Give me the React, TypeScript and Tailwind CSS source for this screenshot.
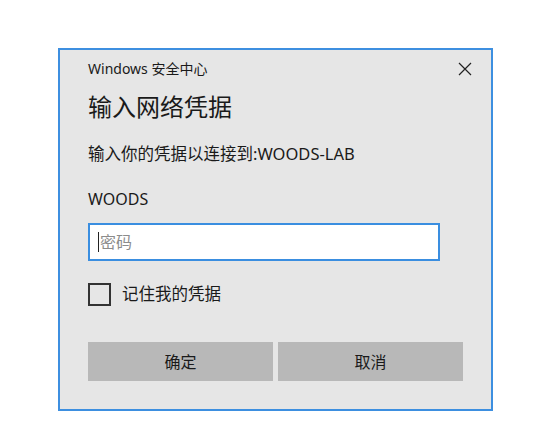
import React from "react";

const font = { fontFamily: '"Noto Sans", "Noto Sans CJK SC", sans-serif' };

const App: React.FC = () => {
  return (
    <div className="w-[554px] h-[439px] bg-white pt-[48px] pl-[58px]" style={font}>
      <div className="w-[435px] h-[363px] bg-[#3d8fe0] p-[2px]">
        <div className="w-full h-full bg-[#e6e6e6] flex flex-col px-[28px]">
          <div className="flex items-center justify-between mt-[9px] h-[20px] -mr-[9px]">
            <span className="text-[14px] leading-[20px] text-[#1a1a1a]">Windows 安全中心</span>
            <svg width="14" height="14" viewBox="0 0 14 14" className="text-[#222]">
              <path d="M1 1 L13 13 M13 1 L1 13" stroke="currentColor" strokeWidth="1.2" fill="none" />
            </svg>
          </div>

          <h1 className="mt-[12px] h-[32px] text-[24px] leading-[32px] text-[#1a1a1a]">输入网络凭据</h1>

          <p className="mt-[19px] h-[24px] text-[16.5px] leading-[24px] text-[#1a1a1a]">输入你的凭据以连接到:WOODS-LAB</p>

          <p className="mt-[21px] h-[24px] text-[16px] leading-[24px] text-[#1a1a1a]">WOODS</p>

          <div className="mt-[12px] w-[352px] h-[38px] shrink-0 bg-white border-2 border-[#3a8ee0] flex items-center pl-[8px]">
            <span className="w-px h-[20px] bg-[#222] mr-[1px]" />
            <span className="text-[16px] leading-[24px] text-[#8c8c8c]">密码</span>
          </div>

          <div className="mt-[20px] h-[26px] flex items-center gap-[11px]">
            <span className="w-[23px] h-[23px] shrink-0 border-2 border-[#333]" />
            <span className="text-[16.5px] leading-[24px] text-[#1a1a1a]">记住我的凭据</span>
          </div>

          <div className="mt-[35px] flex gap-[5px]">
            <button className="w-[185px] h-[39px] bg-[#b8b8b8] text-[16px] text-[#1a1a1a]">确定</button>
            <button className="w-[185px] h-[39px] bg-[#b8b8b8] text-[16px] text-[#1a1a1a]">取消</button>
          </div>
        </div>
      </div>
    </div>
  );
};

export default App;
